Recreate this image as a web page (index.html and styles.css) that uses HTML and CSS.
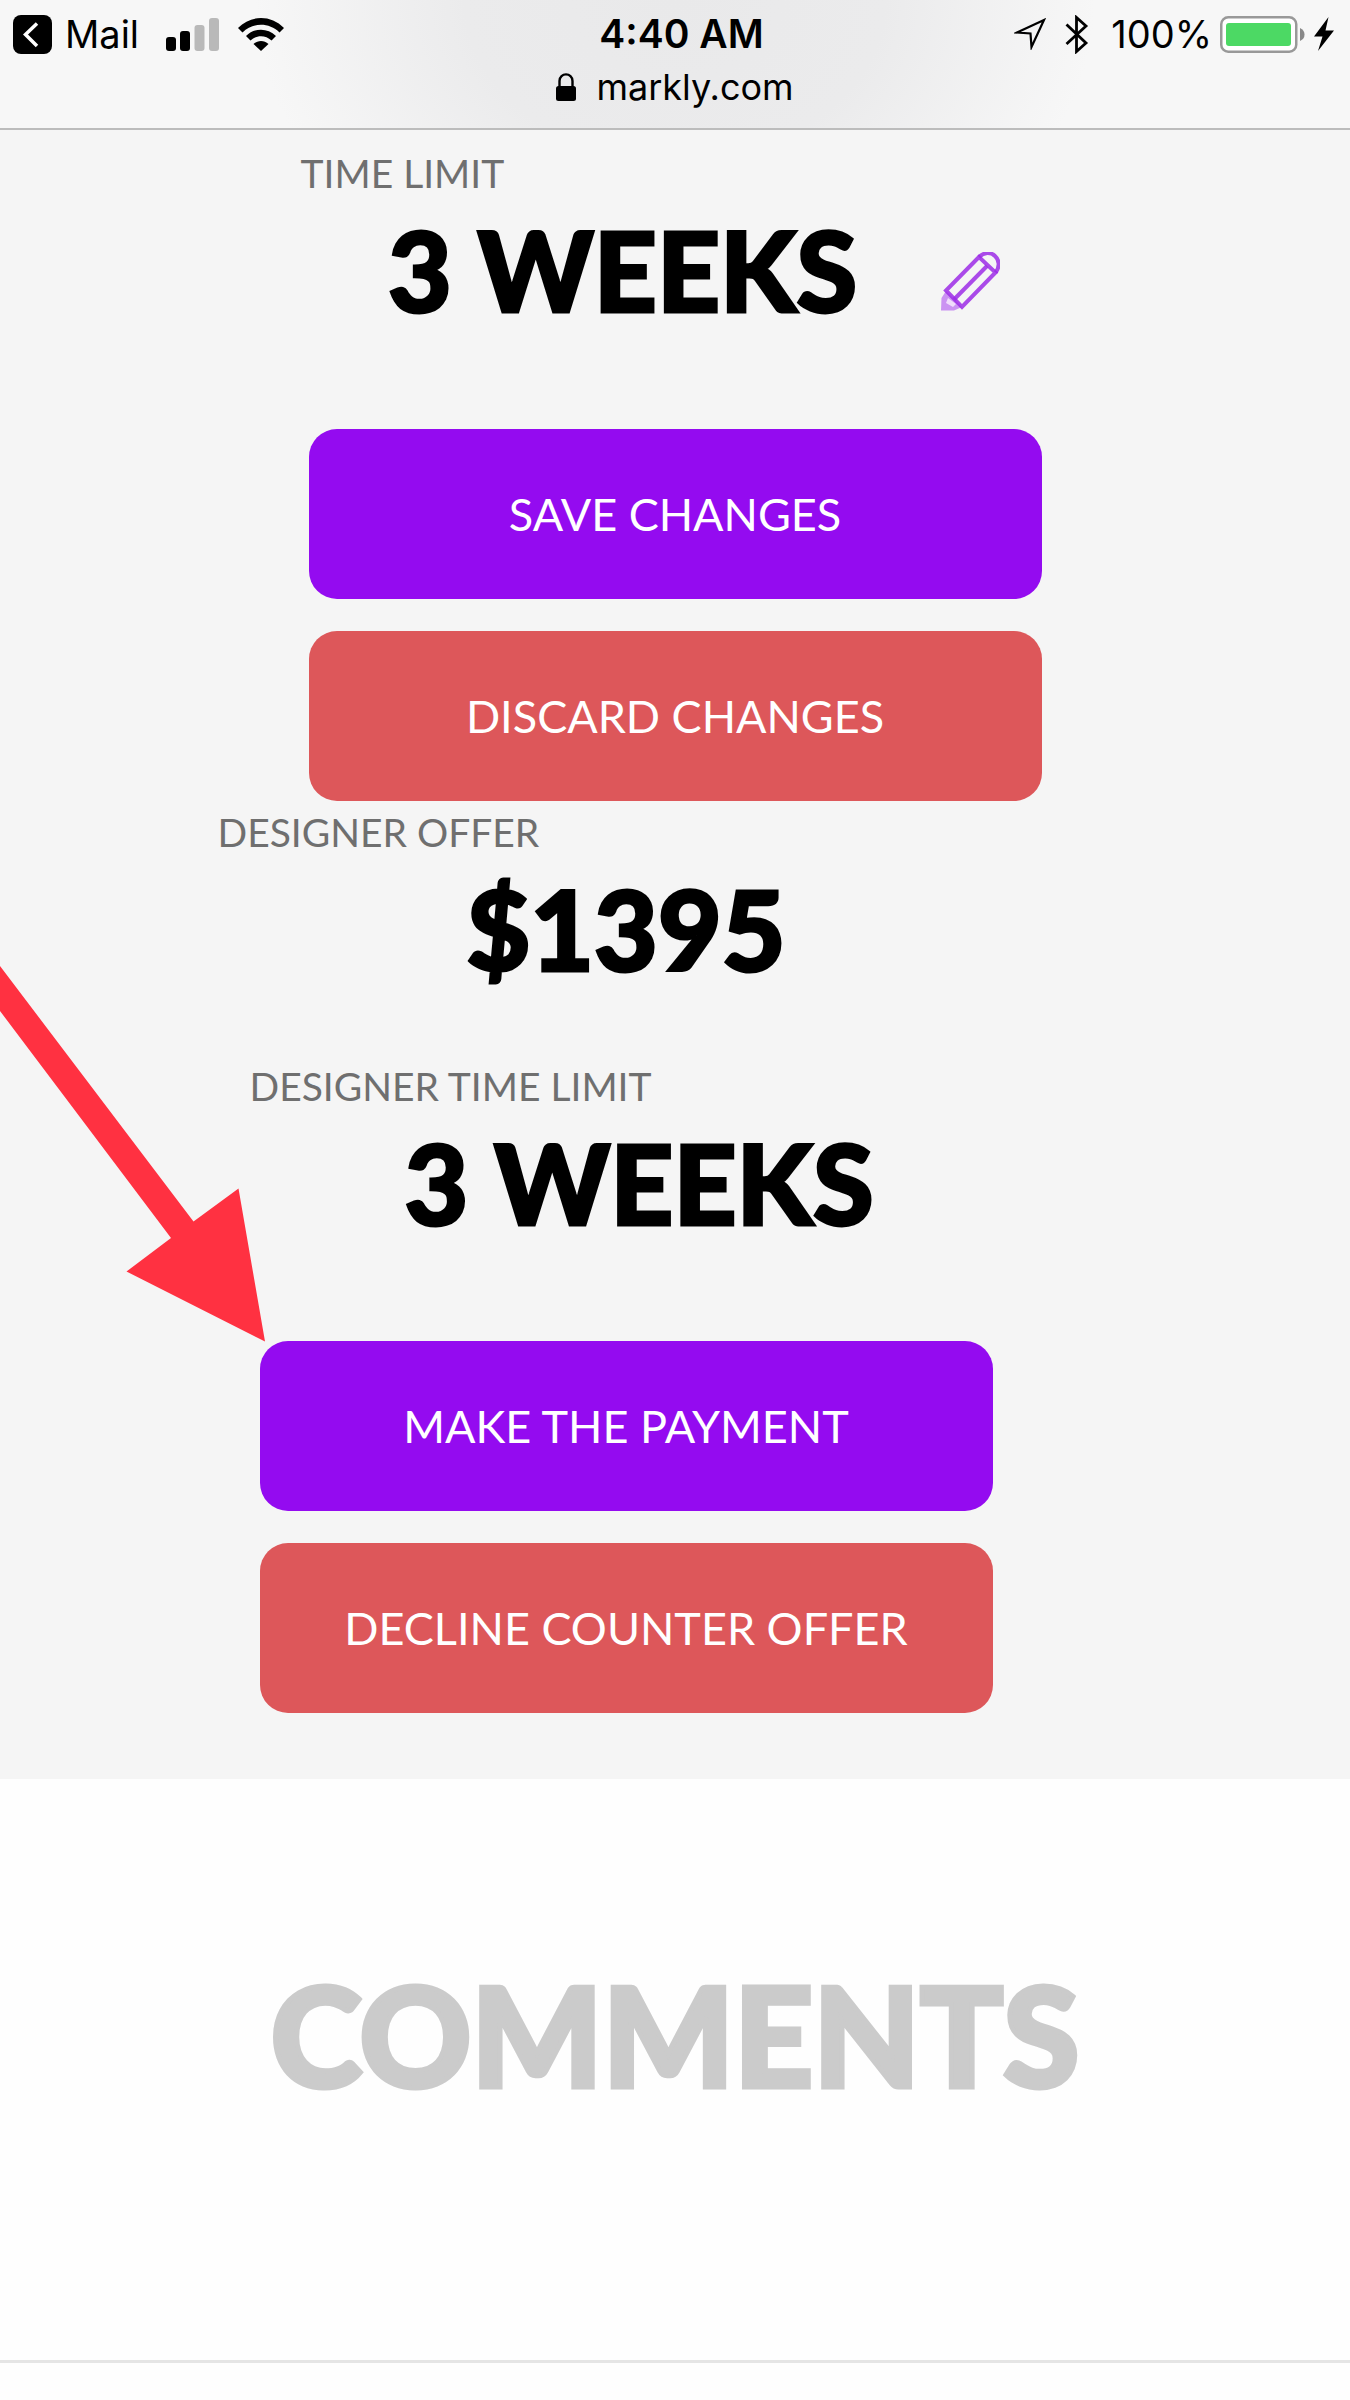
FILE: index.html
```html
<!DOCTYPE html>
<html lang="en">
<head>
<meta charset="utf-8">
<meta name="viewport" content="width=device-width, initial-scale=1">
<title>markly.com</title>
<link rel="stylesheet" href="styles.css">
</head>
<body>
<header class="chrome">
  <div class="status">
    <div class="status-left">
      <svg class="back-icon" width="39" height="39" viewBox="0 0 39 39" aria-hidden="true"><rect width="39" height="39" rx="8"/><path d="M24 8.500L12.500 19.500L24 31" fill="none" stroke="#fff" stroke-width="3.500"/></svg>
      <a class="back" href="#">Mail</a>
      <svg width="53" height="33" viewBox="0 0 53 33" aria-hidden="true"><rect y="19" width="10" height="14" rx="3"/><rect x="14" y="13" width="10" height="20" rx="3"/><rect x="28.500" y="7" width="10" height="26" rx="3" fill="#b9b9b9"/><rect x="43" width="10" height="33" rx="3" fill="#b9b9b9"/></svg>
      <svg class="wifi" width="46" height="33" viewBox="0 0 46 33" aria-hidden="true"><path d="M0 10C13-3.300 33-3.300 46 10L41.500 14.500C31 4.300 15 4.300 4.500 14.500Z"/><path d="M8 18C16.500 9.500 29.500 9.500 38 18L33.500 22.500C27.500 16.800 18.500 16.800 12.500 22.500Z"/><path d="M15.500 26C19.800 21.900 26.200 21.900 30.500 26L23 33Z"/></svg>
    </div>
    <div class="time">4:40 AM</div>
    <div class="status-right">
      <svg width="32" height="32" viewBox="0 0 32 32" aria-hidden="true"><path d="M30 2L3 14.500L16.500 15.500L17.500 29Z" fill="none" stroke="#000" stroke-width="2.200"/></svg>
      <svg class="bluetooth" width="24" height="39" viewBox="0 0 24 39" aria-hidden="true"><path d="M1.500 9.500L21 28L11.500 36.500V2.500L21 11L1.500 29" fill="none" stroke="#000" stroke-width="2.800"/></svg>
      <span>100%</span>
      <svg class="battery" width="85" height="37" viewBox="0 0 85 37" aria-hidden="true"><rect x="1.250" y="1.250" width="75" height="34.500" rx="7" fill="#fff" stroke="#999" stroke-width="2.500"/><rect x="6" y="7" width="65" height="23" rx="3" fill="#4cd964"/><path d="M80 12Q84.500 14 84.500 18.500T80 25Z" fill="#888"/></svg>
      <svg class="bolt" width="20" height="34" viewBox="0 0 20 34" aria-hidden="true"><path d="M14.500 0L0 19.500H8.500L4 34L20 13.500H11.500Z"/></svg>
    </div>
  </div>
  <div class="address">
    <svg width="20" height="28" viewBox="0 0 20 28" aria-hidden="true"><rect y="13" width="20" height="15" rx="2.500"/><path d="M3.500 14V8C3.500-0.800 16.500-0.800 16.500 8V14" fill="none" stroke="#000" stroke-width="2.400"/></svg>
    <span>markly.com</span>
  </div>
</header>
<main>
  <div class="offers">
    <section class="own">
      <h2 class="label">TIME LIMIT</h2>
      <div class="value">
        <span>3 WEEKS</span>
        <button class="edit" type="button" aria-label="Edit time limit"><svg width="59" height="59" viewBox="0 0 59 59" aria-hidden="true"><path d="M0 58.500L0.500 46L5 39L21 55L13 58.500Z" fill="#b45cf0" opacity=".65"/><path d="M7 46L15 52L12 55L5 51Z" fill="#f0dcfc"/><g fill="none" stroke="#9c2be6" stroke-opacity=".85" stroke-width="4"><path d="M38 5L5 38.500L21 55L54.500 20.500Z"/><path d="M13 47.500L46 14"/><path d="M38 5C43 0 50 0 54 4C58.500 8 59 15 54.500 20.500"/></g></svg></button>
      </div>
      <div class="actions">
        <button class="btn primary" type="button">SAVE CHANGES</button>
        <button class="btn danger" type="button">DISCARD CHANGES</button>
      </div>
    </section>
    <section class="designer">
      <h2 class="label">DESIGNER OFFER</h2>
      <div class="value price">$1395</div>
      <h2 class="label limit">DESIGNER TIME LIMIT</h2>
      <div class="value weeks">3 WEEKS</div>
      <div class="actions">
        <button class="btn primary" type="button">MAKE THE PAYMENT</button>
        <button class="btn danger" type="button">DECLINE COUNTER OFFER</button>
      </div>
    </section>
    <svg class="arrow" width="266" height="376" viewBox="0 0 266 376" aria-hidden="true"><path d="M0 0L193.500 255.500L238.500 222.500L265 375.500L126.500 305.500L171 272L0 45Z" fill="#ff3141"/></svg>
  </div>
  <section class="comments">
    <h1>COMMENTS</h1>
  </section>
</main>
</body>
</html>
```
FILE: styles.css
```css
* {
  box-sizing: border-box;
}

body {
  margin: 0;
  background: #fefefe;
  color: #000;
  font-family: Lato, "Open Sans", sans-serif;
}

h1,
h2 {
  margin: 0;
}

svg {
  display: block;
  flex: none;
}

/* Browser chrome */
.chrome {
  height: 130px;
  padding-top: 12px;
  border-bottom: 2px solid #bcbcbc;
  background: radial-gradient(ellipse 420px 320px at 50% 0, #e9e9ea 0%, #ebebec 50%, #f7f7f7 100%) #f7f7f7;
  font: 38px/44px Inter, "Liberation Sans", sans-serif;
}

.status {
  display: grid;
  grid-template-columns: 1fr auto 1fr;
  align-items: center;
  padding: 0 16px 0 13px;
}

.status-left,
.status-right {
  display: flex;
  align-items: center;
}

.status-right {
  justify-content: flex-end;
}

.back {
  margin: 0 27px 0 13px;
  color: #000;
  text-decoration: none;
}

.wifi {
  margin-left: 19px;
}

.time {
  padding-left: 16px;
  font-size: 39px;
  font-weight: 600;
}

.bluetooth {
  margin: 0 22px 0 19px;
}

.battery {
  margin: 0 9px 0 8px;
}

.address {
  display: flex;
  align-items: center;
  justify-content: center;
  gap: 20px;
  margin-top: 9px;
  font-size: 36px;
}

/* Offer panel */
.offers {
  position: relative;
  padding: 19px 0 66px;
  background: #f5f5f5;
}

.own,
.designer {
  width: 733px;
  max-width: 100%;
  margin: 0 auto;
}

.designer {
  position: relative;
  right: 49px;
  padding-top: 7px;
}

.label {
  margin-left: -8px;
  color: #6f6f6f;
  font-size: 39px;
  font-weight: 400;
  line-height: 48px;
}

.designer .label {
  margin-left: -42px;
}

.designer .limit {
  margin: 78px 0 0 -10px;
}

.value {
  display: flex;
  justify-content: center;
  margin-top: 16px;
  font-size: 110px;
  font-weight: 900;
  line-height: 112px;
  -webkit-text-stroke: 3px #000;
}

.own .value {
  gap: 84px;
  padding-left: 38px;
}

.weeks {
  padding-left: 26px;
}

.edit {
  align-self: flex-end;
  margin-bottom: 14px;
  padding: 0;
  border: 0;
  background: none;
}

.actions {
  display: grid;
  gap: 32px;
  margin-top: 104px;
}

.designer .actions {
  margin-top: 103px;
}

.btn {
  height: 170px;
  border: 0;
  border-radius: 28px;
  color: #fff;
  font: 45px/56px Lato, "Open Sans", sans-serif;
}

.primary {
  background: #940bf0;
}

.danger {
  background: #dd575a;
}

.arrow {
  position: absolute;
  top: 836px;
  left: 0;
}

/* Comments */
.comments {
  padding: 175px 0 246px;
  border-bottom: 3px solid #e5e5e5;
  text-align: center;
}

.comments h1 {
  color: #cbcbcb;
  font-size: 138px;
  font-weight: 900;
  line-height: 160px;
  -webkit-text-stroke: 5px #cbcbcb;
}
```
